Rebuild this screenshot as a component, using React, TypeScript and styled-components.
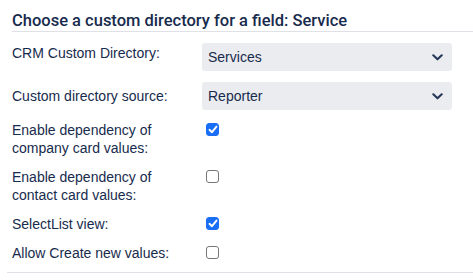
import styled, { createGlobalStyle } from 'styled-components';

const GlobalStyle = createGlobalStyle`
  body {
    margin: 0;
    background: #ffffff;
    font-family: 'Liberation Sans', Arial, sans-serif;
    color: #172b4d;
  }
`;

const Panel = styled.div`
  width: 473px;
  height: 280px;
  padding-left: 12px;
  box-sizing: border-box;
  overflow: hidden;
`;

const Title = styled.h2`
  margin: 0;
  padding-top: 11px;
  font-family: Roboto, 'Liberation Sans', sans-serif;
  font-size: 16.5px;
  line-height: 20px;
  font-weight: 500;
  color: #172b4d;
  border-bottom: 1px solid #dfe1e6;
`;

const Form = styled.div`
  display: flex;
  flex-direction: column;
  gap: 11px;
  padding-top: 11px;
  padding-bottom: 10px;
  margin-left: -5px;
  padding-left: 5px;
  border-bottom: 1px solid #dfe1e6;
`;

const Row = styled.div`
  display: flex;
  align-items: flex-start;
`;

const Label = styled.div<{ $offset?: number }>`
  width: 180px;
  margin-right: 10px;
  padding-top: ${(p) => p.$offset ?? 0}px;
  font-size: 14px;
  line-height: 18px;
  color: #172b4d;
`;

const SelectBox = styled.div`
  width: 250px;
  height: 28px;
  box-sizing: border-box;
  padding: 0 9px 0 6px;
  display: flex;
  align-items: center;
  justify-content: space-between;
  background: #ebecf0;
  border-radius: 3px;
  font-size: 14px;
  color: #172b4d;
`;

const Check = styled.span<{ $checked?: boolean }>`
  display: inline-flex;
  align-items: center;
  justify-content: center;
  width: 13px;
  height: 13px;
  margin: 2px 0 0 4px;
  box-sizing: border-box;
  border-radius: 3px;
  background: ${(p) => (p.$checked ? '#1a6ef5' : '#ffffff')};
  border: 1px solid ${(p) => (p.$checked ? '#1a6ef5' : '#767676')};
`;

const Chevron = () => (
  <svg width="11" height="7" viewBox="0 0 11 7">
    <path d="M1.3 1.3 L5.5 5.3 L9.7 1.3" fill="none" stroke="#253858" strokeWidth="2.1" strokeLinecap="round" strokeLinejoin="round" />
  </svg>
);

const Tick = () => (
  <svg width="10" height="9" viewBox="0 0 10 9">
    <path d="M1.5 4.8 L4 7.2 L8.5 1.6" fill="none" stroke="#ffffff" strokeWidth="1.9" strokeLinecap="round" strokeLinejoin="round" />
  </svg>
);

const Select = ({ value }: { value: string }) => (
  <SelectBox>
    <span>{value}</span>
    <Chevron />
  </SelectBox>
);

const CheckBox = ({ checked }: { checked?: boolean }) => (
  <Check $checked={checked}>{checked && <Tick />}</Check>
);

export default function App() {
  return (
    <>
      <GlobalStyle />
      <Panel>
        <Title>Choose a custom directory for a field: Service</Title>
        <Form>
          <Row>
            <Label $offset={1}>CRM Custom Directory:</Label>
            <Select value="Services" />
          </Row>
          <Row>
            <Label $offset={5}>Custom directory source:</Label>
            <Select value="Reporter" />
          </Row>
          <Row>
            <Label>Enable dependency of company card values:</Label>
            <CheckBox checked />
          </Row>
          <Row>
            <Label>Enable dependency of contact card values:</Label>
            <CheckBox />
          </Row>
          <Row>
            <Label>SelectList view:</Label>
            <CheckBox checked />
          </Row>
          <Row>
            <Label>Allow Create new values:</Label>
            <CheckBox />
          </Row>
        </Form>
      </Panel>
    </>
  );
}
